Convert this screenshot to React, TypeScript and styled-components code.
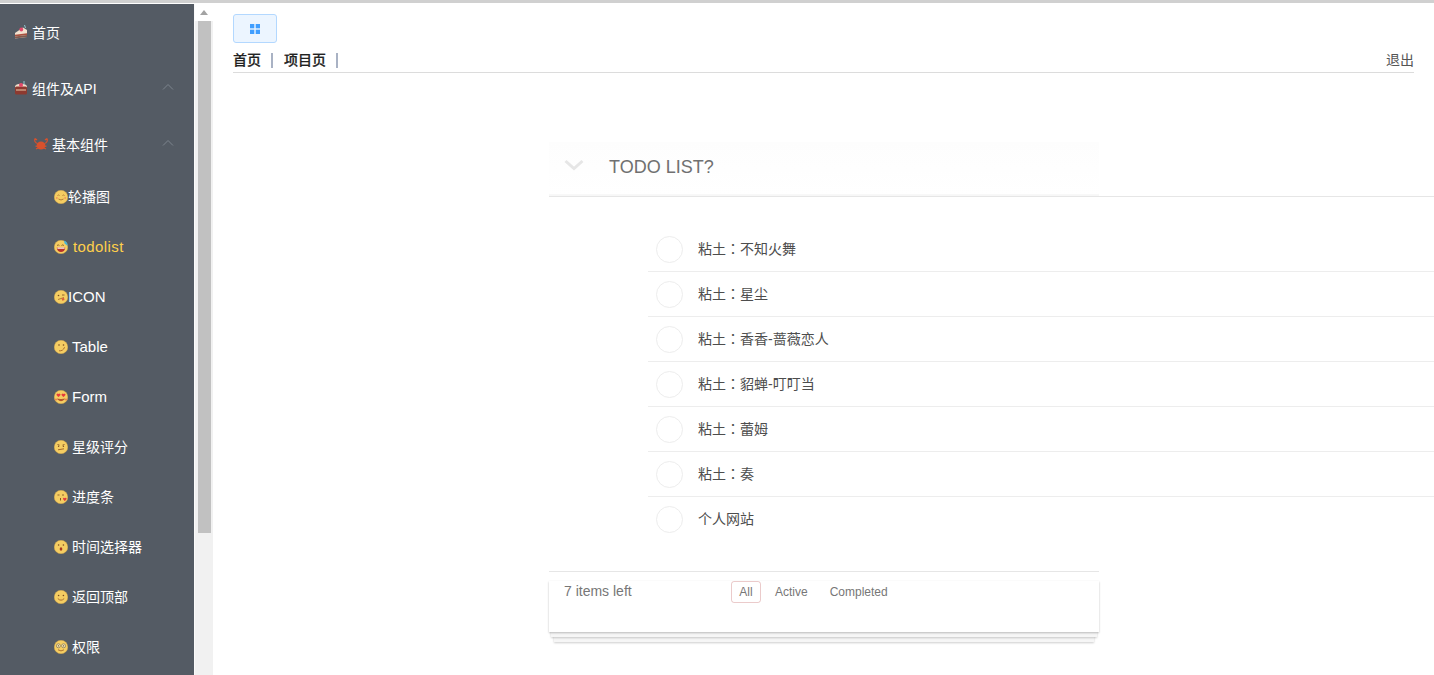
import React from "react";
import styled, { createGlobalStyle } from "styled-components";

const Global = createGlobalStyle`
  html, body { margin: 0; padding: 0; height: 100%; overflow: hidden; background: #fff; }
  #root { height: 100%; }
  * { box-sizing: border-box; }
  body { font-family: "Liberation Sans", "Noto Sans CJK SC", sans-serif; }
`;

const Page = styled.div`
  width: 1434px;
  height: 675px;
  display: flex;
  flex-direction: column;
  overflow: hidden;
`;
const TopLine = styled.div`
  height: 4px;
  flex: none;
  background: linear-gradient(#d0d0d0 0 3px, #fff 3px);
`;
const Body = styled.div`
  flex: 1;
  min-height: 0;
  display: flex;
`;
const Sidebar = styled.nav`
  width: 194px;
  flex: none;
  background: #545b64;
  overflow: hidden;
  display: flex;
  flex-direction: column;
`;
const MenuRow = styled.div<{ $level: number; $active?: boolean }>`
  flex: none;
  height: ${(p) => (p.$level === 3 ? 50 : 56)}px;
  padding-left: ${(p) => (p.$level === 1 ? 14 : p.$level === 2 ? 34 : 54)}px;
  padding-right: 20px;
  display: flex;
  align-items: center;
  font-size: 14px;
  color: ${(p) => (p.$active ? "#ffd04b" : "#fff")};
`;
const MenuIcon = styled.svg`
  width: 14px;
  height: 14px;
  flex: none;
`;
const MenuLabel = styled.span<{ $gap: number; $latin?: boolean; $active?: boolean; $lift?: boolean }>`
  margin-left: ${(p) => p.$gap}px;
  margin-bottom: ${(p) => (p.$lift ? 2 : 0)}px;
  flex: 1;
  white-space: nowrap;
  font-size: ${(p) => (p.$latin ? 15 : 14)}px;
  letter-spacing: ${(p) => (p.$active ? 0.4 : 0)}px;
`;
const Caret = styled.svg`
  width: 12px;
  height: 8px;
  flex: none;
  margin-bottom: 2px;
`;
const Scroll = styled.div`
  width: 19px;
  flex: none;
  background: #f1f1f1;
  padding: 0 2px 0 3px;
  border-left: 1px solid #fafafa;
  display: flex;
  flex-direction: column;
`;
const ScrollArrow = styled.div`
  height: 17px;
  flex: none;
  margin: 0 -2px 0 -3px;
  background: #fff;
  display: flex;
  align-items: center;
  justify-content: center;
`;
const Thumb = styled.div`
  height: 512px;
  flex: none;
  background: #c1c1c1;
`;
const Main = styled.main`
  flex: 1;
  min-width: 0;
  display: flex;
  flex-direction: column;
  overflow: hidden;
`;
const Head = styled.header`
  flex: none;
  margin: 0 20px;
  padding-top: 10px;
  height: 69px;
  border-bottom: 1px solid #dcdcdc;
  display: flex;
  flex-direction: column;
`;
const ToggleButton = styled.button`
  width: 44px;
  height: 29px;
  flex: none;
  padding: 0;
  border: 1px solid #b3d8ff;
  border-radius: 3px;
  background: #ecf5ff;
  display: flex;
  align-items: center;
  justify-content: center;
`;
const Crumbs = styled.div`
  margin-top: 8px;
  height: 18px;
  display: flex;
  align-items: center;
  font-size: 14px;
  color: #222;
`;
const Crumb = styled.span`
  font-weight: 500;
  margin-bottom: 2px;
  -webkit-text-stroke: 0.2px #222;
`;
const Sep = styled.i`
  width: 2px;
  height: 15px;
  flex: none;
  margin: 1px 11px 0 10px;
  background: #a9b2c4;
`;
const Logout = styled.span`
  margin-left: auto;
  margin-bottom: 2px;
  color: #555;
`;
const Todo = styled.section`
  margin: 69px 0 0 336px;
  flex: none;
  width: 885px;
  display: flex;
  flex-direction: column;
`;
const TitleBar = styled.div`
  height: 55px;
  border-bottom: 1px solid #e6e6e6;
  display: flex;
`;
const TitleBox = styled.div`
  width: 550px;
  height: 54px;
  display: flex;
  align-items: center;
  padding: 0 0 3px 15px;
  box-shadow: inset 0 -2px 1px rgba(0, 0, 0, 0.03);
  background-image: linear-gradient(#fdfdfd, #fff);
  font-size: 18px;
  color: #707070;
`;
const Chevron = styled.svg`
  width: 20px;
  height: 12px;
  flex: none;
  margin: 0 25px 5px 0;
`;
const TodoList = styled.ul`
  list-style: none;
  margin: 30px 0 0 99px;
  padding: 0;
`;
const TodoItem = styled.li`
  height: 45px;
  display: flex;
  align-items: center;
  padding-left: 8px;
  border-bottom: 1px solid #ededed;
  font-size: 14px;
  color: #4d4d4d;
  &:last-child { border-bottom-color: transparent; }
`;
const Check = styled.span`
  width: 27px;
  height: 27px;
  flex: none;
  border: 1px solid #ededed;
  border-radius: 50%;
  margin-right: 15px;
`;
const TodoText = styled.span`
  margin-bottom: 2px;
`;
const Colon = styled.span`
  font-family: "Noto Sans CJK TC", sans-serif;
`;
const Footer = styled.footer`
  margin-top: 29px;
  width: 550px;
  border-top: 1px solid #e6e6e6;
  padding-top: 9px;
`;
const FooterCard = styled.div`
  height: 51px;
  padding: 0 15px;
  display: flex;
  align-items: flex-start;
  color: #777;
  box-shadow:
    0 1px 2px rgba(0, 0, 0, 0.25),
    0 7px 0 -2px #f6f6f6,
    0 8px 2px -2px rgba(0, 0, 0, 0.2),
    0 15px 0 -5px #f6f6f6,
    0 16px 2px -5px rgba(0, 0, 0, 0.2);
`;
const Left = styled.span`
  width: 167px;
  font-size: 14px;
  line-height: 20px;
  flex: none;
`;
const Filter = styled.span<{ $on?: boolean }>`
  font-size: 12px;
  height: 22px;
  min-width: 30px;
  text-align: center;
  line-height: 20px;
  padding: 0 7px;
  margin-right: 6px;
  border: 1px solid ${(p) => (p.$on ? "rgba(175,47,47,0.25)" : "transparent")};
  border-radius: 3px;
`;

type Kind = "cake" | "cake2" | "crab" | "blush" | "sweat" | "tongue" | "smirk" | "hearts" | "meh" | "kiss" | "wow" | "smile" | "nerd";

const Yellow = () => <circle cx="7" cy="7" r="6.8" fill="#f5cd62" stroke="#d9a94a" strokeWidth="0.4" />;

const Art = ({ kind }: { kind: Kind }) => {
  switch (kind) {
    case "cake":
      return (
        <>
          <path d="M1 8 L9 2.5 L13 5 L13 12 L1 13.5 Z" fill="#f3e2cf" />
          <path d="M1 9.8 L13 8.3 L13 10 L1 11.5 Z" fill="#a8503f" />
          <path d="M1 11.5 L13 10 L13 12 L1 13.5 Z" fill="#7f5a4f" />
          <circle cx="7.3" cy="4.5" r="1.9" fill="#e2476a" />
          <path d="M10.5 0 L11.5 3" stroke="#8fc7cf" strokeWidth="1" />
        </>
      );
    case "cake2":
      return (
        <>
          <ellipse cx="7" cy="5.5" rx="6" ry="2.8" fill="#f2dcc8" />
          <rect x="1" y="5.5" width="12" height="8" rx="1.5" fill="#8d3a30" />
          <path d="M2 9 H12" stroke="#e8c9a8" strokeWidth="1" />
          <circle cx="7" cy="4" r="2" fill="#e2476a" />
          <path d="M10 0 L10 3.5" stroke="#8fc7cf" strokeWidth="1" />
        </>
      );
    case "crab":
      return (
        <>
          <ellipse cx="7" cy="8.5" rx="4.4" ry="4" fill="#d9512c" />
          <path d="M1 1.5 C0 4 1.5 6 3.5 6.5 M1 1.5 L3 3 M13 1.5 C14 4 12.5 6 10.5 6.5 M13 1.5 L11 3 M1.5 9 L3 9.5 M12.5 9 L11 9.5 M2 12 L4 11 M12 12 L10 11" stroke="#d9512c" strokeWidth="1.2" fill="none" />
        </>
      );
    case "blush":
      return (
        <>
          <Yellow />
          <path d="M3.5 5.5 q1 -1 2 0 M8.5 5.5 q1 -1 2 0 M4.5 9 q2.5 2 5 0" stroke="#a5682a" strokeWidth="0.8" fill="none" />
          <circle cx="2.8" cy="8" r="1" fill="#ef9a5c" />
          <circle cx="11.2" cy="8" r="1" fill="#ef9a5c" />
        </>
      );
    case "sweat":
      return (
        <>
          <Yellow />
          <path d="M3 5.5 q1.2 -1.2 2.4 0 M7.5 5.5 q1.2 -1.2 2.4 0" stroke="#7a4a1e" strokeWidth="0.8" fill="none" />
          <path d="M2.8 7.5 H11.2 C11.2 10.5 9 12 7 12 C5 12 2.8 10.5 2.8 7.5 Z" fill="#b8322a" />
          <rect x="3.4" y="7.5" width="7.2" height="1.2" fill="#fff" />
          <path d="M10 .8 C13 1.5 13.8 4 13.4 5.8 L10.5 3.6 Z" fill="#4bb4d6" />
        </>
      );
    case "tongue":
      return (
        <>
          <Yellow />
          <circle cx="4.5" cy="5.5" r="0.8" fill="#7a4a1e" />
          <path d="M8 5 h2.5" stroke="#7a4a1e" strokeWidth="0.8" />
          <path d="M4 9.5 L10 7.5" stroke="#a5682a" strokeWidth="0.8" />
          <path d="M7.5 8.6 L10 7.8 L10.5 10 L8.4 10.7 Z" fill="#d9603c" />
        </>
      );
    case "smirk":
      return (
        <>
          <Yellow />
          <circle cx="5" cy="5" r="0.8" fill="#7a4a1e" />
          <circle cx="9.5" cy="5" r="0.8" fill="#7a4a1e" />
          <path d="M5 10.8 q4 .5 5.6 -3.6" stroke="#a5682a" strokeWidth="0.9" fill="none" />
        </>
      );
    case "hearts":
      return (
        <>
          <Yellow />
          <path d="M2.5 4.5 a1.1 1.1 0 0 1 2 -.4 a1.1 1.1 0 0 1 2 .4 c0 1 -1.2 1.8 -2 2.6 c-.8 -.8 -2 -1.6 -2 -2.6 Z" fill="#e63a3a" />
          <path d="M7.5 4.5 a1.1 1.1 0 0 1 2 -.4 a1.1 1.1 0 0 1 2 .4 c0 1 -1.2 1.8 -2 2.6 c-.8 -.8 -2 -1.6 -2 -2.6 Z" fill="#e63a3a" />
          <path d="M3.5 9 q3.5 3.5 7 0 q-3.5 1.2 -7 0 Z" fill="#a83a20" stroke="#a83a20" strokeWidth="0.6" />
          <circle cx="2" cy="9.5" r="0.9" fill="#e8754e" />
          <circle cx="12" cy="9.5" r="0.9" fill="#e8754e" />
        </>
      );
    case "meh":
      return (
        <>
          <Yellow />
          <path d="M3.5 4.5 l2 .6 M8.5 5.1 l2 -.6" stroke="#7a4a1e" strokeWidth="0.8" />
          <circle cx="4.6" cy="6.3" r="0.7" fill="#7a4a1e" />
          <circle cx="9.4" cy="6.3" r="0.7" fill="#7a4a1e" />
          <path d="M4 9.8 L10 8.8" stroke="#a5682a" strokeWidth="1" />
        </>
      );
    case "kiss":
      return (
        <>
          <Yellow />
          <path d="M3.5 5 h2 M8 5 h2" stroke="#7a4a1e" strokeWidth="0.8" />
          <path d="M6.5 8 v2.5" stroke="#7a4a1e" strokeWidth="0.9" />
          <path d="M9 8.5 a1 1 0 0 1 1.8 -.3 a1 1 0 0 1 1.8 .3 c0 1 -1 1.6 -1.8 2.6 c-.8 -1 -1.8 -1.6 -1.8 -2.6 Z" fill="#e63a3a" />
        </>
      );
    case "wow":
      return (
        <>
          <Yellow />
          <circle cx="4.6" cy="5" r="0.8" fill="#7a4a1e" />
          <circle cx="9.4" cy="5" r="0.8" fill="#7a4a1e" />
          <ellipse cx="7" cy="9" rx="1.3" ry="1.7" fill="#a83a20" />
        </>
      );
    case "smile":
      return (
        <>
          <Yellow />
          <circle cx="4.6" cy="5.5" r="0.8" fill="#7a4a1e" />
          <circle cx="9.4" cy="5.5" r="0.8" fill="#7a4a1e" />
          <path d="M3.8 8.5 q3.2 3.4 6.4 0" stroke="#a5682a" strokeWidth="0.9" fill="none" />
        </>
      );
    case "nerd":
      return (
        <>
          <Yellow />
          <circle cx="4.4" cy="5.8" r="2" fill="#f7e6b0" stroke="#7d7258" strokeWidth="0.7" />
          <circle cx="9.6" cy="5.8" r="2" fill="#f7e6b0" stroke="#7d7258" strokeWidth="0.7" />
          <circle cx="4.4" cy="5.8" r="0.6" fill="#5a3a1a" />
          <circle cx="9.6" cy="5.8" r="0.6" fill="#5a3a1a" />
          <path d="M4 9.8 q3 2.2 6 0" stroke="#a5682a" strokeWidth="0.9" fill="none" />
        </>
      );
  }
};

const menu: { level: number; kind: Kind; label: string; gap: number; caret?: boolean; latin?: boolean; active?: boolean; lift?: boolean }[] = [
  { level: 1, kind: "cake", label: "首页", gap: 4 },
  { level: 1, kind: "cake2", label: "组件及API", gap: 4, caret: true },
  { level: 2, kind: "crab", label: "基本组件", gap: 4, caret: true },
  { level: 3, kind: "blush", label: "轮播图", gap: 0, lift: true },
  { level: 3, kind: "sweat", label: "todolist", gap: 5, latin: true, active: true, lift: true },
  { level: 3, kind: "tongue", label: "ICON", gap: 0, latin: true, lift: true },
  { level: 3, kind: "smirk", label: "Table", gap: 4, latin: true, lift: true },
  { level: 3, kind: "hearts", label: "Form", gap: 4, latin: true, lift: true },
  { level: 3, kind: "meh", label: "星级评分", gap: 4, lift: true },
  { level: 3, kind: "kiss", label: "进度条", gap: 4, lift: true },
  { level: 3, kind: "wow", label: "时间选择器", gap: 4, lift: true },
  { level: 3, kind: "smile", label: "返回顶部", gap: 4, lift: true },
  { level: 3, kind: "nerd", label: "权限", gap: 4, lift: true },
];

const todos = ["粘土：不知火舞", "粘土：星尘", "粘土：香香-蔷薇恋人", "粘土：貂蝉-叮叮当", "粘土：蕾姆", "粘土：奏", "个人网站"];

const renderTodo = (t: string) => {
  const [head, tail] = t.split("：");
  return tail === undefined ? (
    t
  ) : (
    <>
      {head}
      <Colon>：</Colon>
      {tail}
    </>
  );
};

export default function App() {
  return (
    <Page>
      <Global />
      <TopLine />
      <Body>
        <Sidebar>
          {menu.map((m) => (
            <MenuRow key={m.label} $level={m.level} $active={m.active}>
              <MenuIcon viewBox="0 0 14 14">
                <Art kind={m.kind} />
              </MenuIcon>
              <MenuLabel $gap={m.gap} $latin={m.latin} $active={m.active} $lift={m.lift}>
                {m.label}
              </MenuLabel>
              {m.caret && (
                <Caret viewBox="0 0 12 8">
                  <path d="M1 6.5 L6 1.5 L11 6.5" fill="none" stroke="#7d858e" strokeWidth="1" />
                </Caret>
              )}
            </MenuRow>
          ))}
        </Sidebar>
        <Scroll>
          <ScrollArrow>
            <svg width="8" height="5" viewBox="0 0 8 5">
              <path d="M4 0 L8 5 H0 Z" fill="#a3a3a3" />
            </svg>
          </ScrollArrow>
          <Thumb />
        </Scroll>
        <Main>
          <Head>
            <ToggleButton aria-label="toggle">
              <svg width="10" height="10" viewBox="0 0 10 10">
                <g fill="#409eff">
                  <rect width="4.3" height="4.3" />
                  <rect x="5.7" width="4.3" height="4.3" />
                  <rect y="5.7" width="4.3" height="4.3" />
                  <rect x="5.7" y="5.7" width="4.3" height="4.3" />
                </g>
              </svg>
            </ToggleButton>
            <Crumbs>
              <Crumb>首页</Crumb>
              <Sep />
              <Crumb>项目页</Crumb>
              <Sep />
              <Logout>退出</Logout>
            </Crumbs>
          </Head>
          <Todo>
            <TitleBar>
              <TitleBox>
                <Chevron viewBox="0 0 20 12">
                  <path d="M1.5 2 L10 9.5 L18.5 2" fill="none" stroke="#e6e6e6" strokeWidth="3" />
                </Chevron>
                TODO LIST?
              </TitleBox>
            </TitleBar>
            <TodoList>
              {todos.map((t) => (
                <TodoItem key={t}>
                  <Check />
                  <TodoText>{renderTodo(t)}</TodoText>
                </TodoItem>
              ))}
            </TodoList>
            <Footer>
              <FooterCard>
                <Left>7 items left</Left>
                <Filter $on>All</Filter>
                <Filter>Active</Filter>
                <Filter>Completed</Filter>
              </FooterCard>
            </Footer>
          </Todo>
        </Main>
      </Body>
    </Page>
  );
}
